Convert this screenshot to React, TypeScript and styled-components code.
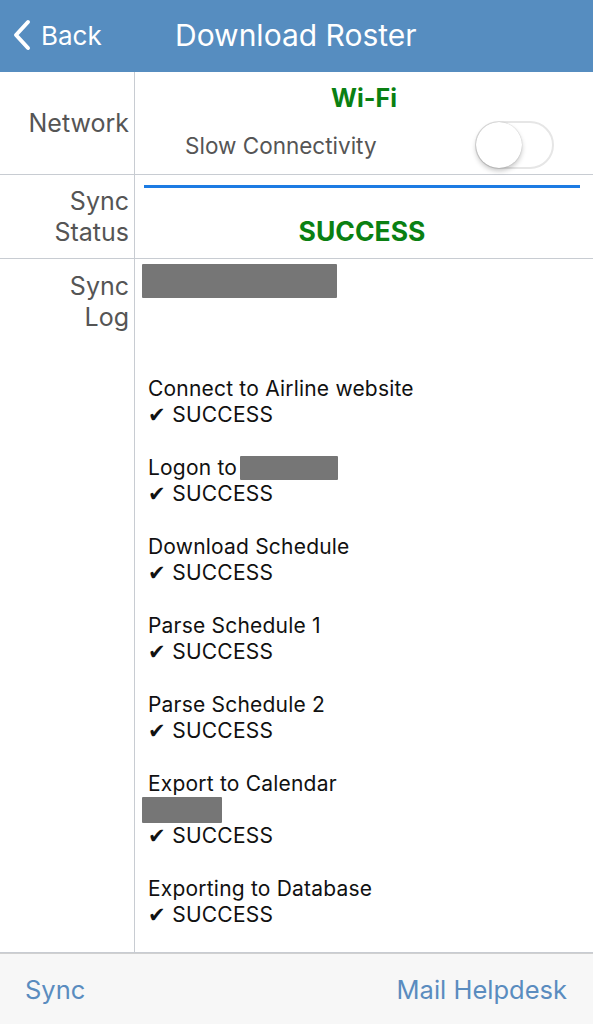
import React from "react";
import styled, { createGlobalStyle } from "styled-components";

const Global = createGlobalStyle`
  html, body { margin: 0; padding: 0; background: #fff; }
  body { font-family: Inter, "Liberation Sans", Arial, sans-serif; }
  * { box-sizing: border-box; }
`;

const Page = styled.div`
  width: 593px;
  height: 1024px;
  display: flex;
  flex-direction: column;
  background: #fff;
  overflow: hidden;
`;

const NavBar = styled.div`
  height: 72px;
  flex: none;
  background: #568dc0;
  display: flex;
  align-items: center;
  padding-bottom: 2px;
  color: #fff;
`;

const BackButton = styled.div`
  display: flex;
  align-items: center;
  padding-left: 12px;
  width: 175px;
  font-size: 26px;
  gap: 9px;
`;

const Title = styled.div`
  font-size: 30px;
`;

const Table = styled.div`
  flex: 1;
  display: grid;
  grid-template-columns: 135px 1fr;
  grid-template-rows: 103px 84px 1fr;
`;

const Label = styled.div<{ $top?: number }>`
  border-right: 1px solid #c8ccd2;
  border-bottom: 1px solid #c8ccd2;
  display: flex;
  flex-direction: column;
  justify-content: ${(p) => (p.$top !== undefined ? "flex-start" : "center")};
  padding-top: ${(p) => p.$top ?? 0}px;
  align-items: flex-end;
  padding-right: 5px;
  font-size: 25px;
  line-height: 31px;
  color: #555;
  text-align: right;
`;

const Cell = styled.div`
  border-bottom: 1px solid #c8ccd2;
  position: relative;
`;

const NetworkCell = styled(Cell)`
  display: flex;
  flex-direction: column;
  padding-top: 11px;
`;

const GreenText = styled.div<{ $size: number }>`
  color: #0a8012;
  font-weight: bold;
  font-size: ${(p) => p.$size}px;
  text-align: center;
`;

const SlowRow = styled.div`
  display: flex;
  align-items: center;
  justify-content: space-between;
  padding: 8px 39px 0 50px;
  font-size: 22.5px;
  color: #555;
`;

const Toggle = styled.div`
  width: 79px;
  height: 48px;
  border-radius: 24px;
  border: 2px solid #e6e6e6;
  background: #fff;
  position: relative;
`;

const Knob = styled.div`
  position: absolute;
  left: -1px;
  top: -1px;
  width: 46px;
  height: 46px;
  border-radius: 50%;
  background: #fff;
  box-shadow: 0 3px 5px rgba(0, 0, 0, 0.22), 0 0 1px rgba(0, 0, 0, 0.3);
`;

const StatusCell = styled(Cell)`
  display: flex;
  flex-direction: column;
  padding: 10px 13px 0 9px;
`;

const Progress = styled.div`
  height: 3px;
  background: #1c7be3;
`;

const StatusText = styled(GreenText)`
  margin-top: 27px;
`;

const LogCell = styled(Cell)`
  padding: 5px 0 0 7px;
`;

const Redact = styled.div<{ $w: number; $h: number }>`
  display: inline-block;
  width: ${(p) => p.$w}px;
  height: ${(p) => p.$h}px;
  background: #767676;
  border-radius: 1px;
  vertical-align: middle;
`;

const LogList = styled.div`
  margin-top: 78px;
  padding-left: 6px;
  display: flex;
  flex-direction: column;
  gap: 27px;
`;

const Entry = styled.div`
  font-size: 21px;
  letter-spacing: 0.2px;
  line-height: 26px;
  color: #111;
`;

const Line = styled.div`
  display: flex;
  align-items: center;
  gap: 3px;
  height: 26px;
`;

const RedactLine = styled.div`
  height: 26px;
  display: flex;
  align-items: center;
  margin-left: -6px;
`;

const Footer = styled.div`
  height: 71px;
  flex: none;
  background: #f7f7f7;
  border-top: 1px solid #d0d0d0;
  display: flex;
  align-items: center;
  justify-content: space-between;
  padding: 0 26px 0 25px;
  font-size: 25.5px;
  color: #5a8cbf;
`;

const Check = () => <span>✔&nbsp;SUCCESS</span>;

type Item = { title: string; redactInline?: number; redactLine?: number };

const items: Item[] = [
  { title: "Connect to Airline website" },
  { title: "Logon to", redactInline: 98 },
  { title: "Download Schedule" },
  { title: "Parse Schedule 1" },
  { title: "Parse Schedule 2" },
  { title: "Export to Calendar", redactLine: 80 },
  { title: "Exporting to Database" },
];

export default function App() {
  return (
    <Page>
      <Global />
      <NavBar>
        <BackButton>
          <svg width="20" height="32" viewBox="0 0 20 32">
            <path d="M16 3 L4 16 L16 29" fill="none" stroke="#fff" strokeWidth="4" strokeLinecap="round" strokeLinejoin="round" />
          </svg>
          <span>Back</span>
        </BackButton>
        <Title>Download Roster</Title>
      </NavBar>
      <Table>
        <Label>Network</Label>
        <NetworkCell>
          <GreenText $size={25}>Wi-Fi</GreenText>
          <SlowRow>
            <span>Slow Connectivity</span>
            <Toggle>
              <Knob />
            </Toggle>
          </SlowRow>
        </NetworkCell>
        <Label>
          <span>Sync</span>
          <span>Status</span>
        </Label>
        <StatusCell>
          <Progress />
          <StatusText $size={26.5}>SUCCESS</StatusText>
        </StatusCell>
        <Label $top={12}>
          <span>Sync</span>
          <span>Log</span>
        </Label>
        <LogCell>
          <Redact $w={195} $h={34} />
          <LogList>
            {items.map((it) => (
              <Entry key={it.title}>
                <Line>
                  <span>{it.title}</span>
                  {it.redactInline && <Redact $w={it.redactInline} $h={24} />}
                </Line>
                {it.redactLine && (
                  <RedactLine>
                    <Redact $w={it.redactLine} $h={26} />
                  </RedactLine>
                )}
                <Line>
                  <Check />
                </Line>
              </Entry>
            ))}
          </LogList>
        </LogCell>
      </Table>
      <Footer>
        <span>Sync</span>
        <span>Mail Helpdesk</span>
      </Footer>
    </Page>
  );
}
